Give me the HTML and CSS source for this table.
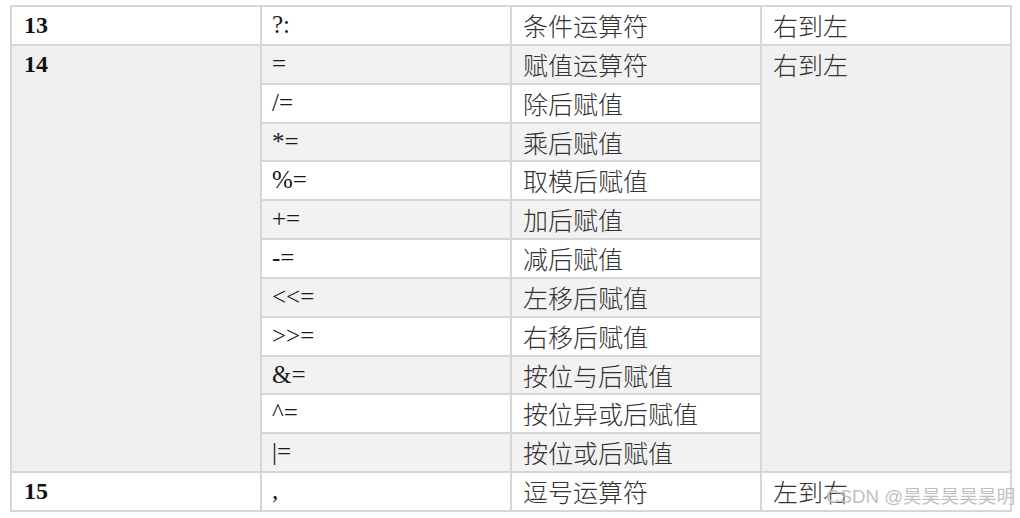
FILE: index.html
```html
<!DOCTYPE html>
<html lang="zh-CN">
<head>
<meta charset="utf-8">
<link rel="stylesheet" href="styles.css">
</head>
<body>
<div class="page">
<table class="ops">
  <colgroup><col class="c"><col class="c"><col class="c"><col class="c"></colgroup>
  <tbody>
    <tr class="w">
      <td class="num">13</td><td class="op">?:</td><td class="zh">条件运算符</td><td class="zh">右到左</td>
    </tr>
    <tr class="g">
      <td class="num g" rowspan="11">14</td><td class="op">=</td><td class="zh">赋值运算符</td><td class="zh g" rowspan="11">右到左</td>
    </tr>
    <tr class="w"><td class="op">/=</td><td class="zh">除后赋值</td></tr>
    <tr class="g"><td class="op">*=</td><td class="zh">乘后赋值</td></tr>
    <tr class="w"><td class="op">%=</td><td class="zh">取模后赋值</td></tr>
    <tr class="g"><td class="op">+=</td><td class="zh">加后赋值</td></tr>
    <tr class="w"><td class="op">-=</td><td class="zh">减后赋值</td></tr>
    <tr class="g"><td class="op">&lt;&lt;=</td><td class="zh">左移后赋值</td></tr>
    <tr class="w"><td class="op">&gt;&gt;=</td><td class="zh">右移后赋值</td></tr>
    <tr class="g"><td class="op">&amp;=</td><td class="zh">按位与后赋值</td></tr>
    <tr class="w"><td class="op">^=</td><td class="zh">按位异或后赋值</td></tr>
    <tr class="g"><td class="op">|=</td><td class="zh">按位或后赋值</td></tr>
    <tr class="w">
      <td class="num">15</td><td class="op">,</td><td class="zh">逗号运算符</td><td class="zh">左到右</td>
    </tr>
  </tbody>
</table>
<div class="mark">CSDN @昊昊昊昊昊明</div>
</div>
</body>
</html>
```
FILE: styles.css
```css
html, body {
  margin: 0;
  padding: 0;
  background: #ffffff;
}
.page {
  position: relative;
  width: 1020px;
  height: 518px;
  padding: 5px 0 0 10px;
  box-sizing: border-box;
}
.ops {
  border-collapse: collapse;
  table-layout: fixed;
  width: 1001px;
  border: 2px solid #d9d9d9;
}
.ops .c { width: 250px; }
.ops td {
  border: 2px solid #d6d6d6;
  height: 38.85px;
  padding: 0 0 0 11px;
  vertical-align: top;
  line-height: 36px;
  box-sizing: border-box;
  white-space: nowrap;
}
tr.w td { background: #ffffff; }
tr.g td { background: #f2f2f2; }
tr td.g { background: #f0f0f0; }
.num {
  font-family: "Liberation Serif", "Times New Roman", serif;
  font-weight: bold;
  font-size: 24px;
  color: #111;
  padding-left: 12px !important;
}
.op {
  font-family: "Liberation Serif", "Times New Roman", serif;
  font-size: 25px;
  color: #1a1a1a;
  padding-left: 10px !important;
}
.zh {
  font-family: "Noto Sans CJK SC", sans-serif;
  font-size: 25px;
  font-weight: 300;
  color: #333333;
}
.mark {
  position: absolute;
  left: 826px;
  top: 486px;
  font-family: "Liberation Sans", "Noto Sans CJK SC", sans-serif;
  font-size: 18.7px;
  line-height: 22px;
  color: rgba(170, 170, 170, 0.75);
  text-shadow: 0 0 2px #ffffff;
  white-space: nowrap;
}
```
